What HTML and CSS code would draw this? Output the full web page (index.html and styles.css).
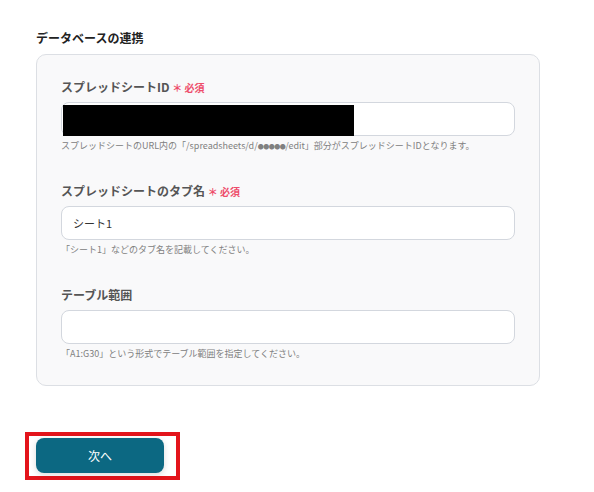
FILE: index.html
```html
<!DOCTYPE html>
<html>
<head>
    <meta charset="utf-8">
    <title>データベースの連携</title>
    <link rel="stylesheet" href="styles.css">
</head>
<body>
    <h2 class="section-title">データベースの連携</h2>

    <div class="card">
        <div class="field">
            <div class="label">スプレッドシートID <span class="req">＊ 必須</span></div>
            <div class="input redacted"><div class="redact"></div></div>
            <div class="help">スプレッドシートのURL内の「/spreadsheets/d/<span class="dots">●●●●●</span>/edit」部分がスプレッドシートIDとなります。</div>
        </div>

        <div class="field">
            <div class="label">スプレッドシートのタブ名 <span class="req">＊ 必須</span></div>
            <div class="input">シート1</div>
            <div class="help">「シート1」などのタブ名を記載してください。</div>
        </div>

        <div class="field">
            <div class="label">テーブル範囲</div>
            <div class="input"></div>
            <div class="help">「A1:G30」という形式でテーブル範囲を指定してください。</div>
        </div>
    </div>

    <div class="highlight">
        <button class="next">次へ</button>
    </div>
</body>
</html>
```

FILE: styles.css
```css
body {
    font-family: "Noto Sans CJK JP", "Noto Sans", sans-serif;
    background: #fff;
    color: #333;
    margin: 0;
    padding: 30px 0 0 36px;
}
.section-title {
    font-size: 12px;
    line-height: 16px;
    font-weight: bold;
    color: #222;
    margin: 0 0 8px;
}
.card {
    width: 454px;
    background: #f9f9fa;
    border: 1px solid #dcdfe4;
    border-radius: 10px;
    padding: 24px 24px 24px;
}
.field {
    margin-bottom: 30px;
}
.field:last-child {
    margin-bottom: 0;
}
.label {
    height: 16px;
    font-size: 12px;
    line-height: 16px;
    font-weight: bold;
    color: #555;
    margin-bottom: 7px;
}
.req {
    color: #ee4d6a;
    font-size: 10px;
    line-height: 10px;
}
.input {
    box-sizing: border-box;
    height: 34px;
    background: #fff;
    border: 1px solid #d3d7de;
    border-radius: 8px;
    display: flex;
    align-items: center;
    padding: 0 11px;
    font-size: 11px;
    color: #333;
}
.input.redacted {
    padding: 2px 0 0 1px;
    align-items: flex-start;
}
.redact {
    width: 291px;
    height: 31px;
    background: #000;
}
.help {
    height: 14px;
    font-size: 9px;
    line-height: 14px;
    color: #808080;
    margin-top: 3px;
}
.dots {
    font-size: 6px;
    line-height: 6px;
    letter-spacing: -0.5px;
}
.highlight {
    display: inline-block;
    margin: 46px 0 0 -11px;
    border: 4px solid #e3141b;
    padding: 2px 12px 3px 7px;
}
.next {
    display: block;
    width: 128px;
    height: 35px;
    border: none;
    border-radius: 8px;
    background: #0c6882;
    color: #fff;
    font-family: inherit;
    font-size: 12px;
    box-shadow: 0 2px 6px rgba(0, 0, 0, 0.15);
}
```
